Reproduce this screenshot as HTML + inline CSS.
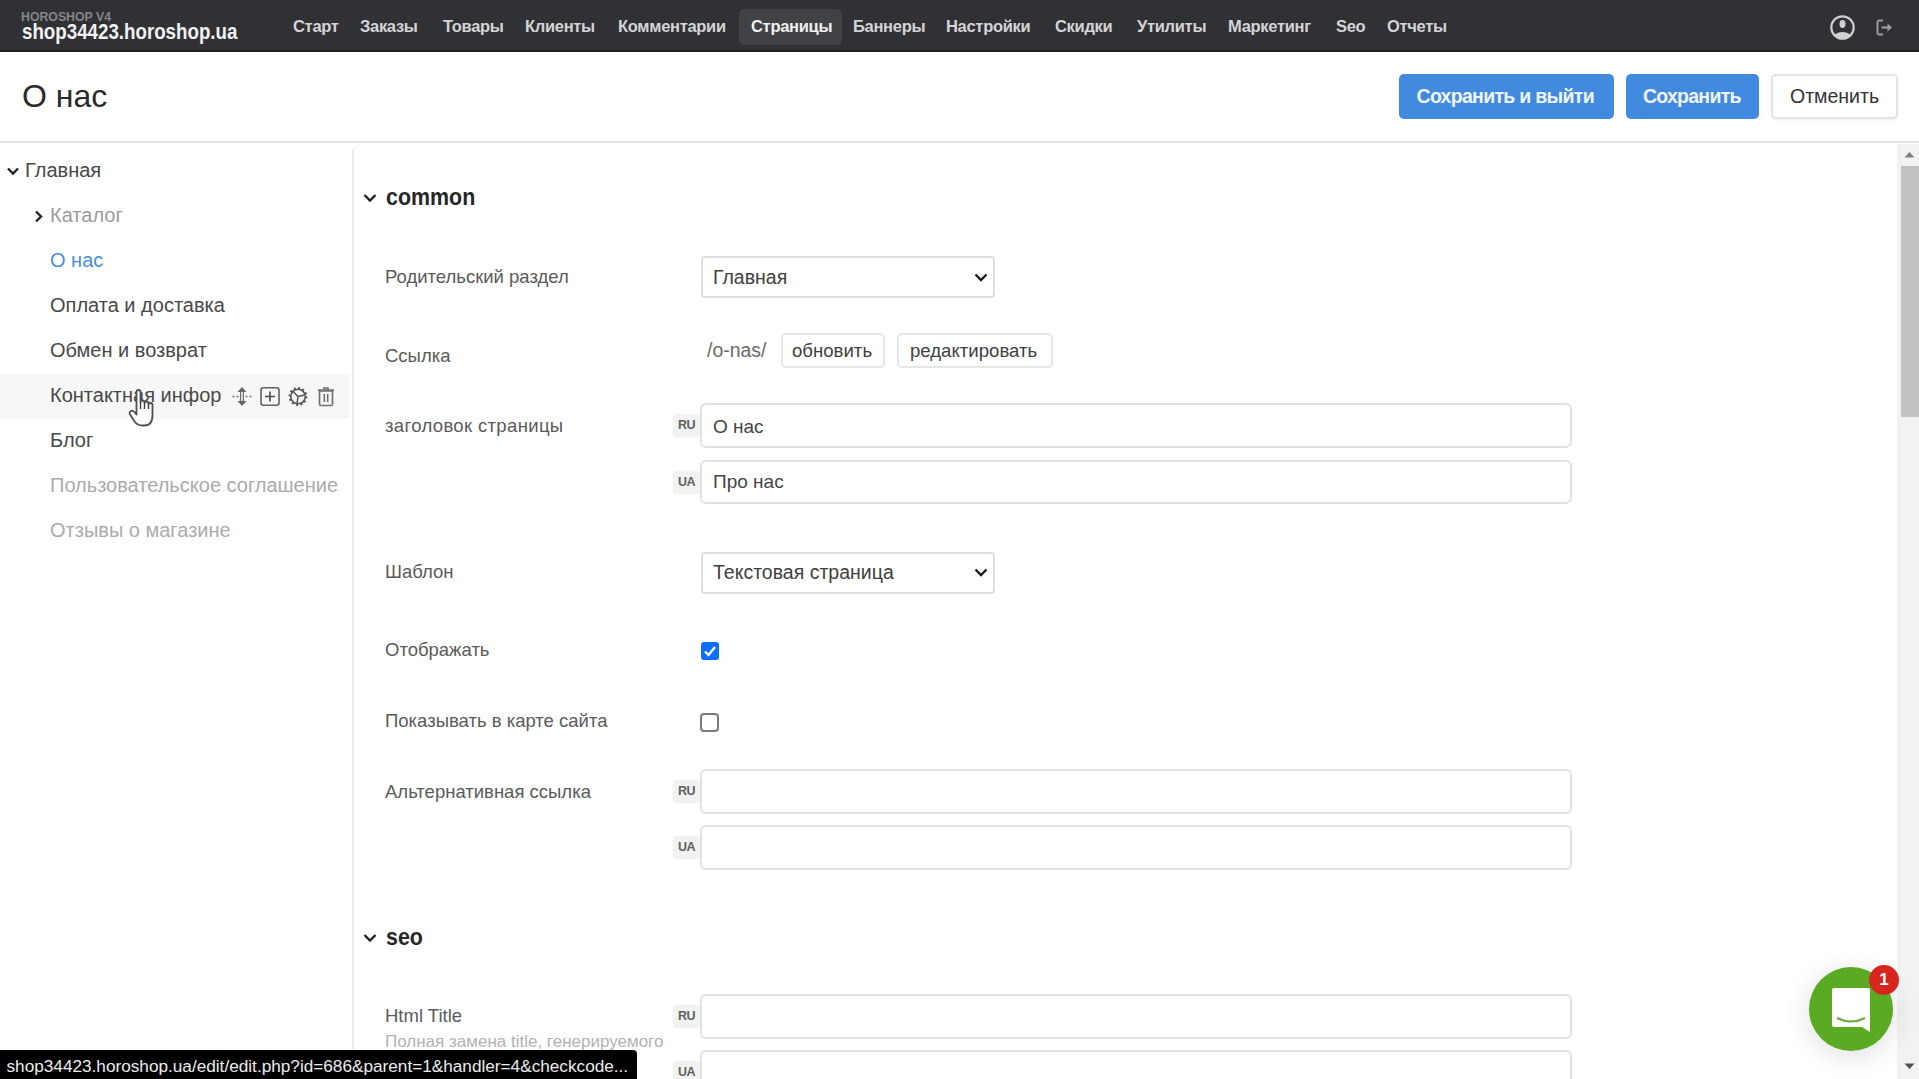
<!DOCTYPE html>
<html><head><meta charset="utf-8">
<style>
*{box-sizing:border-box}
html,body{margin:0;padding:0;width:1919px;height:1079px;overflow:hidden;background:#fff;font-family:"Liberation Sans",sans-serif}
.a{position:absolute;white-space:nowrap;line-height:normal}
#hdr{position:absolute;left:0;top:0;width:1919px;height:52px;background:#303135;border-bottom:2px solid #1c1d20}
.nav{position:absolute;top:17px;font-size:16.5px;letter-spacing:-0.3px;font-weight:bold;color:#d4d4d6;white-space:nowrap}
.side{position:absolute;font-size:20px;color:#484848;white-space:nowrap}
.lbl{position:absolute;font-size:18.5px;color:#5a5a5a;white-space:nowrap}
.inp{position:absolute;left:700px;width:872px;height:45px;border:2px solid #e2e2e2;border-radius:6px;background:#fff}
.sel{position:absolute;left:701px;width:294px;height:42px;border:2px solid #dedede;border-radius:4px;background:#fff}
.lang{position:absolute;left:673px;width:27px;height:23px;background:#f2f2f2;border-radius:4px;box-shadow:0 0 3px rgba(0,0,0,0.04);font-size:12.5px;font-weight:bold;color:#606060;text-align:center;line-height:23px;letter-spacing:-0.5px}
.btn{position:absolute;border-radius:5px;white-space:nowrap}
</style></head><body>

<!-- HEADER -->
<div id="hdr"></div>
<div class="a" style="left:21px;top:9.5px;font-size:12.3px;font-weight:bold;color:#85868a;letter-spacing:0px">HOROSHOP V4</div>
<div class="a" style="left:21.5px;top:19.5px;font-size:21.5px;font-weight:bold;color:#f2f2f2;transform:scaleX(0.871);transform-origin:0 0">shop34423.horoshop.ua</div>

<div style="position:absolute;left:739px;top:9px;width:103px;height:36px;background:#414246;border-radius:6px"></div>
<div class="nav" style="left:293px">Старт</div>
<div class="nav" style="left:360px">Заказы</div>
<div class="nav" style="left:443px">Товары</div>
<div class="nav" style="left:525px">Клиенты</div>
<div class="nav" style="left:618px">Комментарии</div>
<div class="nav" style="left:751px;color:#f0f0f0">Страницы</div>
<div class="nav" style="left:853px">Баннеры</div>
<div class="nav" style="left:946px">Настройки</div>
<div class="nav" style="left:1055px">Скидки</div>
<div class="nav" style="left:1137px">Утилиты</div>
<div class="nav" style="left:1228px">Маркетинг</div>
<div class="nav" style="left:1336px">Seo</div>
<div class="nav" style="left:1387px">Отчеты</div>

<!-- user icon -->
<svg style="position:absolute;left:1829px;top:14px" width="27" height="27" viewBox="0 0 27 27">
  <defs><clipPath id="uc"><circle cx="13.5" cy="13.5" r="11"/></clipPath></defs>
  <circle cx="13.5" cy="13.5" r="11.2" fill="none" stroke="#cfcfd1" stroke-width="2.2"/>
  <g clip-path="url(#uc)">
  <ellipse cx="13.5" cy="10" rx="3" ry="4" fill="#cfcfd1"/>
  <ellipse cx="13.5" cy="25" rx="10" ry="7" fill="#cfcfd1"/>
  </g>
</svg>
<!-- logout icon -->
<svg style="position:absolute;left:1875px;top:18px" width="20" height="19" viewBox="0 0 20 19">
  <path d="M8 2.5 H4.5 Q2.5 2.5 2.5 4.5 V14.5 Q2.5 16.5 4.5 16.5 H8" fill="none" stroke="#9c9ca0" stroke-width="2"/>
  <path d="M6.5 9.5 H15" stroke="#9c9ca0" stroke-width="2.2"/>
  <path d="M12.5 5.5 L17 9.5 L12.5 13.5 Z" fill="#9c9ca0"/>
</svg>

<!-- TITLE BAR -->
<div class="a" style="left:22px;top:78px;font-size:32px;color:#2a2a2a">О нас</div>
<div class="btn" style="left:1399px;top:74px;width:215px;height:45px;background:#418ae0"></div>
<div class="a" style="left:1416.5px;top:85px;font-size:19.5px;font-weight:bold;letter-spacing:-0.7px;color:#eef6ff">Сохранить и выйти</div>
<div class="btn" style="left:1626px;top:74px;width:133px;height:45px;background:#418ae0"></div>
<div class="a" style="left:1643px;top:85px;font-size:19.5px;font-weight:bold;letter-spacing:-0.75px;color:#eef6ff">Сохранить</div>
<div class="btn" style="left:1771px;top:74px;width:127px;height:45px;background:#fff;border:2px solid #e4e4e4;box-shadow:0 1px 2px rgba(0,0,0,0.08)"></div>
<div class="a" style="left:1790px;top:84.5px;font-size:19.5px;color:#333">Отменить</div>

<div style="position:absolute;left:0;top:140.5px;width:1919px;height:2.5px;background:#e4e4e4"></div>

<!-- SIDEBAR -->
<div style="position:absolute;left:0;top:374px;width:350px;height:45px;background:#f7f7f7"></div>
<svg style="position:absolute;left:6px;top:166px" width="14" height="11" viewBox="0 0 14 11"><path d="M2 2.5 L7 7.5 L12 2.5" fill="none" stroke="#222" stroke-width="2.4"/></svg>
<div class="side" style="left:25px;top:159px">Главная</div>
<svg style="position:absolute;left:33px;top:209px" width="11" height="15" viewBox="0 0 11 15"><path d="M3 2.5 L8 7.5 L3 12.5" fill="none" stroke="#222" stroke-width="2.4"/></svg>
<div class="side" style="left:50px;top:204px;color:#9b9b9b">Каталог</div>
<div class="side" style="left:50px;top:249px;color:#4a8fe0">О нас</div>
<div class="side" style="left:50px;top:294px">Оплата и доставка</div>
<div class="side" style="left:50px;top:339px">Обмен и возврат</div>
<div class="side" style="left:50px;top:384px">Контактная инфор</div>
<div class="side" style="left:50px;top:429px">Блог</div>
<div class="side" style="left:50px;top:474px;color:#ababab">Пользовательское соглашение</div>
<div class="side" style="left:50px;top:519px;color:#ababab">Отзывы о магазине</div>


<!-- row icons -->
<svg style="position:absolute;left:231px;top:386px" width="22" height="21" viewBox="0 0 22 21">
  <path d="M11 1 L15.5 6 H6.5 Z M11 20 L15.5 15 H6.5 Z" fill="#666"/>
  <path d="M9.6 5.5 V15.5 M12.4 5.5 V15.5" stroke="#707070" stroke-width="1.3"/>
  <path d="M1.5 10.5 H3.5 M5.5 10.5 H7.5 M14.5 10.5 H16.5 M18.5 10.5 H20.5" stroke="#777" stroke-width="1.6"/>
</svg>
<svg style="position:absolute;left:259px;top:386px" width="22" height="21" viewBox="0 0 22 21">
  <rect x="2" y="1.8" width="18" height="17.4" rx="2.5" fill="none" stroke="#606060" stroke-width="1.6"/>
  <path d="M11 5.5 V15.5 M6 10.5 H16" stroke="#505050" stroke-width="1.7"/>
</svg>
<svg style="position:absolute;left:287px;top:386px" width="22" height="21" viewBox="0 0 22 21">
  <circle cx="11" cy="10.5" r="7.3" fill="none" stroke="#555" stroke-width="1.6"/>
  <circle cx="11" cy="10.5" r="8.6" fill="none" stroke="#444" stroke-width="1.6" stroke-dasharray="1.8 2.7"/>
  <path d="M11 10.5 L6 5.5 M11 10.5 L17.5 9 M11 10.5 L10 17.5" stroke="#555" stroke-width="1.5"/>
</svg>
<svg style="position:absolute;left:316px;top:386px" width="20" height="21" viewBox="0 0 20 21">
  <path d="M3.5 5 H16.5 V18 Q16.5 19.5 15 19.5 H5 Q3.5 19.5 3.5 18 Z" fill="none" stroke="#707070" stroke-width="1.7"/>
  <path d="M2 4 H18 M8 4 V2 H12 V4" fill="none" stroke="#707070" stroke-width="1.7"/>
  <path d="M8.3 8 V16 M11.7 8 V16" stroke="#707070" stroke-width="1.6"/>
</svg>
<!-- cursor -->
<svg style="position:absolute;left:128px;top:389px" width="28" height="38" viewBox="0 0 28 38">
  <path d="M8.5 3 Q8.5 1 10.5 1 Q12.5 1 12.5 3 V13 Q12.5 11.5 14.5 11.5 Q16.5 11.5 16.5 13.5 V14 Q16.5 12.5 18.5 12.5 Q20.5 12.5 20.5 14.5 V15.5 Q20.5 14 22.5 14 Q24.5 14 24.5 16 V26 Q24.5 36.5 16.5 36.5 H14.5 Q9.5 36.5 6.5 32.5 L1.8 25 Q1 23 2.8 22 Q4.6 21 6.3 23 L8.5 25.5 Z" fill="#fff" stroke="#505050" stroke-width="1.8" stroke-linejoin="round"/>
  <path d="M12.5 13 V20 M16.5 14 V20 M20.5 15.5 V20" stroke="#3a3a3a" stroke-width="1.4"/>
</svg>
<div style="position:absolute;left:351.5px;top:146px;width:8px;height:933px;border-left:2.5px solid #ececec;border-top:1px solid #f6f6f6;border-radius:6px 0 0 0"></div>

<!-- CONTENT -->
<svg style="position:absolute;left:362px;top:192px" width="16" height="12" viewBox="0 0 16 12"><path d="M2.5 3 L8 8.5 L13.5 3" fill="none" stroke="#1e1e1e" stroke-width="2.3"/></svg>
<div class="a" style="left:385.5px;top:183.2px;font-size:24px;font-weight:bold;color:#262626;transform:scaleX(0.893);transform-origin:0 0">common</div>

<div class="lbl" style="left:385px;top:266px">Родительский раздел</div>
<div class="sel" style="top:256px"></div>
<div class="a" style="left:713px;top:266px;font-size:19.5px;color:#404040">Главная</div>
<svg style="position:absolute;left:973px;top:271px" width="16" height="13" viewBox="0 0 16 13"><path d="M2.5 3.5 L8 9 L13.5 3.5" fill="none" stroke="#1a1a1a" stroke-width="2.4"/></svg>

<div class="lbl" style="left:385px;top:345px">Ссылка</div>
<div class="a" style="left:707px;top:339px;font-size:19.4px;color:#6a6a6a">/o-nas/</div>
<div class="btn" style="left:781px;top:333px;width:104px;height:35px;border:2px solid #e6e6e6;border-radius:5px"></div>
<div class="a" style="left:792px;top:340px;font-size:18.6px;color:#404040">обновить</div>
<div class="btn" style="left:897px;top:333px;width:156px;height:35px;border:2px solid #e6e6e6;border-radius:5px"></div>
<div class="a" style="left:910px;top:340px;font-size:18.6px;color:#404040">редактировать</div>

<div class="lbl" style="left:385px;top:415px;letter-spacing:0.35px">заголовок страницы</div>
<div class="lang" style="top:414px">RU</div>
<div class="inp" style="top:403px"></div>
<div class="a" style="left:713px;top:416px;font-size:19px;color:#444">О нас</div>
<div class="lang" style="top:471px">UA</div>
<div class="inp" style="top:460px;height:44px"></div>
<div class="a" style="left:713px;top:470.5px;font-size:19px;color:#444">Про нас</div>

<div class="lbl" style="left:385px;top:561px">Шаблон</div>
<div class="sel" style="top:552px"></div>
<div class="a" style="left:713px;top:561px;font-size:19.5px;color:#404040">Текстовая страница</div>
<svg style="position:absolute;left:973px;top:566px" width="16" height="13" viewBox="0 0 16 13"><path d="M2.5 3.5 L8 9 L13.5 3.5" fill="none" stroke="#1a1a1a" stroke-width="2.4"/></svg>

<div class="lbl" style="left:385px;top:639px">Отображать</div>
<div style="position:absolute;left:701px;top:642px;width:18px;height:18px;background:#0d6efd;border-radius:3px"></div>
<svg style="position:absolute;left:701px;top:642px" width="18" height="18" viewBox="0 0 18 18"><path d="M4 9.5 L7.5 13 L14 5" fill="none" stroke="#fff" stroke-width="2.4"/></svg>

<div class="lbl" style="left:385px;top:710px">Показывать в карте сайта</div>
<div style="position:absolute;left:700px;top:713px;width:19px;height:19px;border:2px solid #7a7a7a;border-radius:4px;background:#fff"></div>

<div class="lbl" style="left:385px;top:781px">Альтернативная ссылка</div>
<div class="lang" style="top:780px">RU</div>
<div class="inp" style="top:769px"></div>
<div class="lang" style="top:836px">UA</div>
<div class="inp" style="top:825px;height:45px"></div>

<svg style="position:absolute;left:362px;top:932px" width="16" height="12" viewBox="0 0 16 12"><path d="M2.5 3 L8 8.5 L13.5 3" fill="none" stroke="#1e1e1e" stroke-width="2.3"/></svg>
<div class="a" style="left:385.5px;top:923px;font-size:24px;font-weight:bold;color:#262626;transform:scaleX(0.893);transform-origin:0 0">seo</div>

<div class="lbl" style="left:385px;top:1005px">Html Title</div>
<div class="a" style="left:385px;top:1032px;font-size:17px;color:#b2b2b2">Полная замена title, генерируемого</div>
<div class="lang" style="top:1005px">RU</div>
<div class="inp" style="top:994px"></div>
<div class="lang" style="top:1061px">UA</div>
<div class="inp" style="top:1050px"></div>

<!-- scrollbar -->
<div style="position:absolute;left:1897px;top:144px;width:22px;height:935px;background:#f2f2f2"></div>
<div style="position:absolute;left:1901px;top:166px;width:18px;height:251px;background:#c1c1c1"></div>
<svg style="position:absolute;left:1903px;top:150px" width="13" height="9" viewBox="0 0 13 9"><path d="M1.5 7.5 L6.5 2 L11.5 7.5 Z" fill="#808080"/></svg>
<svg style="position:absolute;left:1903px;top:1062px" width="13" height="9" viewBox="0 0 13 9"><path d="M1.5 1.5 L6.5 7 L11.5 1.5 Z" fill="#505050"/></svg>

<!-- status bar -->
<div style="position:absolute;left:0;top:1050px;width:637px;height:29px;background:#000;border-radius:0 4px 0 0"></div>
<div class="a" style="left:6.5px;top:1056px;font-size:17.2px;color:#ececec">shop34423.horoshop.ua/edit/edit.php?id=686&amp;parent=1&amp;handler=4&amp;checkcode...</div>

<!-- chat bubble -->
<div style="position:absolute;left:1809px;top:967px;width:84px;height:84px;border-radius:50%;background:#5aab23;box-shadow:0 5px 28px rgba(0,0,0,0.13)"></div>
<svg style="position:absolute;left:1830px;top:985px" width="42" height="48" viewBox="0 0 42 48">
  <path d="M4 3 H38 Q40 3 40 5 V47 L32 42 H4 Q2 42 2 40 V5 Q2 3 4 3 Z" fill="#fff"/>
  <path d="M7 33 Q21 40 35 33" fill="none" stroke="#6aa83c" stroke-width="2.2"/>
</svg>
<div style="position:absolute;left:1869px;top:965px;width:30px;height:30px;border-radius:50%;background:#d7261d"></div>
<div class="a" style="left:1869px;top:970px;width:30px;text-align:center;font-size:17px;font-weight:bold;color:#fff">1</div>
</body></html>
